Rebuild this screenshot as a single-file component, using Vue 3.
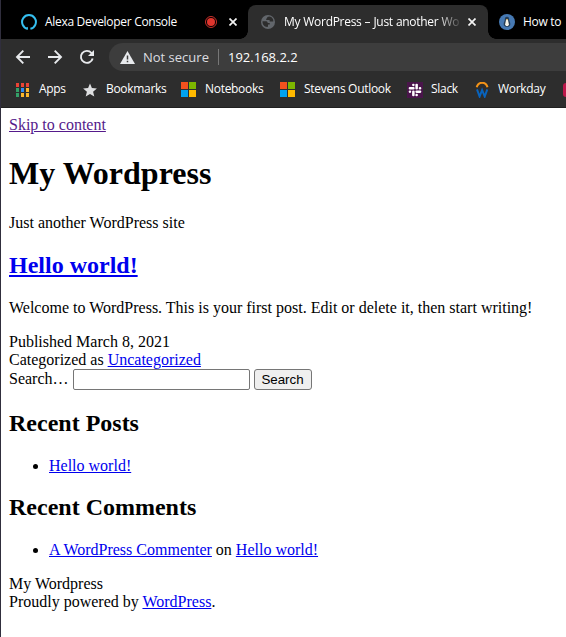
<script setup>
const appColors = ['#ea4335', '#ea4335', '#ea4335', '#34a068', '#2f8df5', '#fbb62c', '#34a068', '#fbb62c', '#fbb62c']
const slackBars = [
  [0, 2.7, 4.7, 2], [2.7, 0, 2, 2], [5.3, 0, 2, 4.7], [8, 2.7, 2, 2],
  [5.3, 5.3, 4.7, 2], [5.3, 8, 2, 2], [2.7, 5.3, 2, 4.7], [0, 5.3, 2, 2],
]
const bookmarks = [
  { label: 'Apps', icon: 'apps', width: 67 },
  { label: 'Bookmarks', icon: 'star', width: 99 },
  { label: 'Notebooks', icon: 'ms', width: 99 },
  { label: 'Stevens Outlook', icon: 'ms', width: 127 },
  { label: 'Slack', icon: 'slack', width: 67 },
  { label: 'Workday', icon: 'workday', width: 89 },
  { label: '', icon: 'red', width: 16 },
]
</script>

<template>
  <div class="window">
    <header class="chrome">
      <div class="tabs">
        <div class="tab first">
          <svg class="fav" width="16" height="16" viewBox="0 0 16 16"><path d="M6.6 14.7A6.9 6.9 0 1 1 9.4 14.7" fill="none" stroke="#35bff0" stroke-width="2" /><path d="M6.8 12.7v3l-2.2-1z" fill="#35bff0" /></svg>
          <span class="title t1">Alexa Developer Console</span>
          <svg class="rec" width="12" height="12" viewBox="0 0 12 12"><circle cx="6" cy="6" r="5.5" fill="none" stroke="#c9302b" /><circle cx="6" cy="6" r="4" fill="#e0352d" /></svg>
          <svg class="close" width="8" height="8" viewBox="0 0 8 8"><path d="M.5.5l7 7M7.5.5l-7 7" /></svg>
        </div>
        <div class="tab active">
          <svg class="globe" width="14" height="14" viewBox="0 0 14 14"><circle cx="7" cy="7" r="7" fill="#62666b" /><path d="M1.5 6.2h3.2c1.3 0 2 .7 2 1.7h2v1.7H7v2.2c-3 .7-5.700-2-5.500-5.600zM8.200 1.500c-1.600.2-2.200.8-2.200 2h-.8v1.400h3.400v1.600h3.700c.4-2.200-1.400-4.800-4.100-5z" fill="#2d2d2d" /></svg>
          <span class="title t2">My WordPress – Just another Wo</span>
          <svg class="close" width="8" height="8" viewBox="0 0 8 8"><path d="M.5.5l7 7M7.5.5l-7 7" /></svg>
        </div>
        <div class="tab third">
          <svg class="fav" width="16" height="16" viewBox="0 0 16 16"><circle cx="8" cy="8" r="8" fill="#4679b3" /><path d="M8 2.700c-2 0-2.200 1.500-2.200 3C5.700 7.500 4 9 5 11.500l1.500 1.300h3L11 11.500c1-2.500-.7-4-.8-5.800 0-1.500-.2-3-2.200-3z" fill="#263d55" /><path d="M7.100 5.500h1.800l1 5L9 12H7l-.9-1.500z" fill="#f5f3e8" /><path d="M7 5h2l-1 1.500z" fill="#eeb650" /></svg>
          <span class="title t3">How to</span>
        </div>
      </div>
      <div class="toolbar">
        <svg class="nav" width="16" height="16" viewBox="0 0 16 16"><path d="M15 8H2M8.300 1.700L2 8l6.300 6.300" /></svg>
        <svg class="nav" width="16" height="16" viewBox="0 0 16 16"><path d="M1 8h13M7.700 1.700L14 8l-6.300 6.300" /></svg>
        <svg class="nav" width="16" height="16" viewBox="0 0 16 16"><path d="M13.700 9.400A6 6 0 1 1 12.500 4l1.300 1.400" /><path d="M15 .9v6H9z" class="solid" /></svg>
        <div class="omnibox">
          <svg width="15" height="13" viewBox="0 0 15 13"><path d="M7.500 0L15 13H0z" fill="#e8eaed" /><path d="M7.500 4.500v4M7.500 9.700v1.500" stroke="#3d3d3d" stroke-width="1.500" /></svg>
          <span class="secure">Not secure</span>
          <i class="divider"></i>
          <span class="url">192.168.2.2</span>
        </div>
      </div>
      <nav class="bookmarks">
        <div v-for="(b, i) in bookmarks" :key="i" class="bookmark" :style="{ width: b.width + 'px' }">
          <svg width="16" height="16" viewBox="0 0 16 16">
            <g v-if="b.icon === 'apps'">
              <rect v-for="(c, n) in appColors" :key="n" :x="1 + (n % 3) * 5" :y="1 + Math.floor(n / 3) * 5" width="3" height="4" :fill="c" />
            </g>
            <path v-else-if="b.icon === 'star'" d="M8 1.500l1.900 4.600 5 .4-3.800 3.200 1.200 4.800L8 11.900l-4.300 2.600 1.200-4.800-3.800-3.200 5-.4z" fill="#dedfe1" />
            <g v-else-if="b.icon === 'ms'">
              <path d="M0 0h7v7H0z" fill="#f4511e" /><path d="M8 0h7v7H8z" fill="#7db700" />
              <path d="M0 8h7v7H0z" fill="#00a2ef" /><path d="M8 8h7v7H8z" fill="#ffb900" />
            </g>
            <g v-else-if="b.icon === 'slack'">
              <path d="M0 0h16v16H0z" fill="#4a154b" />
              <g transform="translate(1.700 1.700) scale(1.260)" fill="#fff">
                <rect v-for="(r, n) in slackBars" :key="n" :x="r[0]" :y="r[1]" :width="r[2]" :height="r[3]" rx=".9" />
              </g>
            </g>
            <g v-else-if="b.icon === 'workday'" fill="none">
              <path d="M2.700 5.300C4.300-.8 12-.8 13.500 5.300" stroke="#f39318" stroke-width="2" />
              <path d="M3 7.300l2.600 7.200L8.100 8l2.600 6.500 2.600-7.200" stroke="#0863bd" stroke-width="2" />
            </g>
            <rect v-else y="1" width="14" height="14" rx="3" fill="#bd174a" />
          </svg>
          <span v-if="b.label">{{ b.label }}</span>
        </div>
      </nav>
    </header>
    <main class="page">
      <a class="visited" href="#content">Skip to content</a>
      <h1>My Wordpress</h1>
      <p>Just another WordPress site</p>
      <article id="content">
        <h2 class="entry"><a href="#post">Hello world!</a></h2>
        <p>Welcome to WordPress. This is your first post. Edit or delete it, then start writing!</p>
        <div>Published March 8, 2021</div>
        <div>Categorized as <a href="#category">Uncategorized</a></div>
      </article>
      <form class="search" @submit.prevent>
        <label for="search">Search…</label>
        <input id="search" type="search">
        <button type="submit">Search</button>
      </form>
      <h2>Recent Posts</h2>
      <ul><li><a href="#post">Hello world!</a></li></ul>
      <h2>Recent Comments</h2>
      <ul><li><a href="#author">A WordPress Commenter</a> on <a href="#post">Hello world!</a></li></ul>
      <footer>
        <div>My Wordpress</div>
        <div>Proudly powered by <a href="#wordpress">WordPress</a>.</div>
      </footer>
    </main>
  </div>
</template>

<style>
body { background: #fff; overflow: hidden; }
</style>

<style scoped>
.window { box-sizing: border-box; width: 566px; height: 637px; border-left: 1px solid #302e3d; overflow: hidden; background: #fff; }
.chrome { height: 108px; box-sizing: border-box; background: #2d2d2d; border-bottom: 1px solid #202020; overflow: hidden; font: 12px/16px "Open Sans", "Noto Sans", sans-serif; color: #fff; }
.tabs { height: 39px; background: #000; display: flex; align-items: flex-end; overflow: hidden; }
.tab { height: 34px; box-sizing: border-box; display: flex; align-items: center; flex: none; }
.first { width: 247px; padding-left: 20px; }
.fav { margin-right: 8px; flex: none; }
.title { white-space: nowrap; flex: none; }
.t1 { width: 160px; letter-spacing: -0.3px; }
.rec { margin-right: 12px; }
.close { fill: none; stroke: #f4f4f4; stroke-width: 1.700; flex: none; }
.active { width: 240px; background: #2d2d2d; border-radius: 8px 8px 0 0; padding-left: 13px; position: relative; }
.active::before, .active::after { content: ""; position: absolute; bottom: 0; width: 8px; height: 8px; }
.active::before { left: -8px; background: radial-gradient(circle at 0 0, #000 7.5px, #2d2d2d 8px); }
.active::after { right: -8px; background: radial-gradient(circle at 100% 0, #000 7.5px, #2d2d2d 8px); }
.globe { margin-right: 9px; flex: none; }
.t2 { width: 175px; margin-right: 9px; letter-spacing: -0.3px; word-spacing: 0.3px; -webkit-mask-image: linear-gradient(90deg, #000 153px, transparent 179px); mask-image: linear-gradient(90deg, #000 153px, transparent 179px); }
.third { width: 240px; padding-left: 11px; }
.t3 { letter-spacing: -0.3px; }
.toolbar { height: 36px; display: flex; align-items: center; padding-left: 14px; }
.nav { flex: none; margin-right: 16px; fill: none; stroke: #e8eaed; stroke-width: 1.900; }
.nav .solid { fill: #e8eaed; stroke: none; }
.omnibox { margin-left: -2px; height: 28px; flex: 1; box-sizing: border-box; padding-left: 11px; display: flex; align-items: center; background: #3d3d3d; border-radius: 14px 0 0 14px; font-size: 13px; }
.secure { width: 67px; margin-left: 8px; color: #dcdde0; white-space: nowrap; }
.divider { width: 1px; height: 16px; background: #777; margin: 0 9px 0 8px; }
.bookmarks { display: flex; height: 29px; align-items: center; padding-left: 14px; }
.bookmark { flex: none; display: flex; align-items: center; gap: 8px; white-space: nowrap; letter-spacing: -0.3px; }
.bookmark svg { flex: none; }
.bookmark span { padding-bottom: 2px; }
.page { margin: 8px; font: 16px "Liberation Serif", serif; color: #000; }
a { color: #0000ee; text-decoration: underline; }
a.visited { color: #551a8b; }
h1 { font-size: 32px; margin: 21.44px 0; }
h2 { font-size: 24px; margin: 19.92px 0; }
p { margin: 16px 0; }
ul { margin: 16px 0; padding-left: 40px; list-style: disc; }
.search input { width: 177px; height: 21px; box-sizing: border-box; margin: 0 4px; border: 1px solid #767676; border-radius: 2px; padding: 1px 2px; background: #fff; font: 13.333px "Liberation Sans", sans-serif; -webkit-appearance: none; appearance: none; }
.search button { width: 58px; height: 21px; box-sizing: border-box; margin: 0; border: 1px solid #767676; border-radius: 3px; background: #efefef; color: #000; font: 13.333px "Liberation Sans", sans-serif; padding: 1px 6px; }
</style>
